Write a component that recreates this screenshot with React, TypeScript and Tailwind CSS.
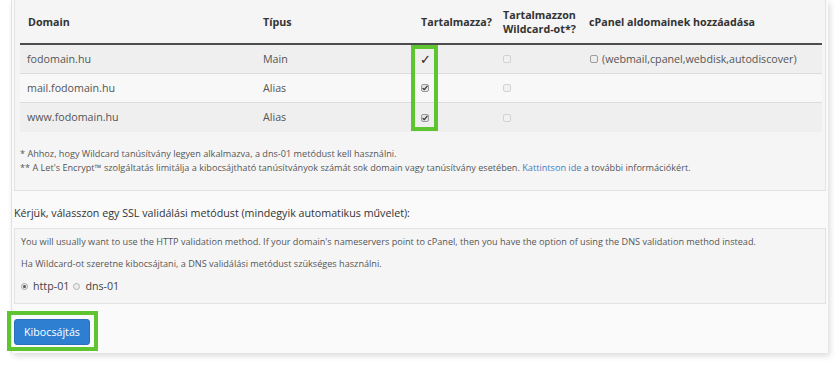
import React from "react";

const CheckMark = () => (
  <svg width="6" height="6" viewBox="0 0 8 8" className="block">
    <path d="M1.2 4.4 L3.1 6.3 L6.9 1.5" fill="none" stroke="#333" strokeWidth="1.6" strokeLinecap="round" strokeLinejoin="round" />
  </svg>
);

const CheckedBox = () => (
  <span className="inline-flex w-[8px] h-[8px] items-center justify-center rounded-[2px] border border-[#9a9a9a] bg-[#e4e4e4]">
    <CheckMark />
  </span>
);

const DisabledBox = () => (
  <span className="inline-block w-[8px] h-[8px] rounded-[2px] border border-[#d2d2d2] bg-[#f1f1f1]" />
);

const EmptyBox = () => (
  <span className="inline-block w-[8px] h-[8px] rounded-[2px] border border-[#9c9c9c] bg-[#ededed]" />
);

const rows = [
  { domain: "fodomain.hu", type: "Main", main: true, bg: "bg-[#efefef]", border: true },
  { domain: "mail.fodomain.hu", type: "Alias", main: false, bg: "bg-[#f8f8f8]", border: true },
  { domain: "www.fodomain.hu", type: "Alias", main: false, bg: "bg-[#efefef]", border: false },
];

export default function App() {
  return (
    <div className="w-[835px] h-[367px] bg-white overflow-hidden relative font-['Open_Sans',sans-serif] text-[10.7px] text-[#444]">
      <div className="ml-[11px] w-[817px] bg-[#fafafa] border-l border-[#e2e2e2] pl-[2px] pr-[2px] pb-[8px] shadow-[2px_3px_6px_rgba(0,0,0,0.14)]">
        {/* Well 1 */}
        <div className="bg-[#f5f5f5] border border-t-0 border-[#e3e3e3] pl-[5px] pr-[3px] pb-[15px]">
          <div className="relative">
            <div className="grid grid-cols-[235px_158px_82px_86px_1fr] h-[45px] border-b-2 border-[#4d4d4d] font-bold text-[#333] leading-[14px] items-center">
              <div className="pl-[8px]">Domain</div>
              <div className="pl-[8px]">Típus</div>
              <div className="pl-[8px]">Tartalmazza?</div>
              <div className="pl-[8px] whitespace-nowrap">
                Tartalmazzon
                <br />
                Wildcard-ot*?
              </div>
              <div className="pl-[8px] whitespace-nowrap">cPanel aldomainek hozzáadása</div>
            </div>
            {rows.map((r) => (
              <div
                key={r.domain}
                className={`grid grid-cols-[235px_158px_82px_86px_1fr] h-[29px] items-center ${r.bg} ${r.border ? "border-b border-[#dcdcdc]" : ""} text-[#555]`}
              >
                <div className="pl-[7px]">{r.domain}</div>
                <div className="pl-[8px]">{r.type}</div>
                <div className="pl-[8px] flex items-center">
                  {r.main ? (
                    <span className="text-[13px] leading-none text-[#222] -ml-[1px]">✓</span>
                  ) : (
                    <CheckedBox />
                  )}
                </div>
                <div className="pl-[8px] flex items-center">
                  <DisabledBox />
                </div>
                <div className="pl-[9px] flex items-center gap-[4px] whitespace-nowrap">
                  {r.main && (
                    <>
                      <EmptyBox />
                      <span>(webmail,cpanel,webdisk,autodiscover)</span>
                    </>
                  )}
                </div>
              </div>
            ))}
            {/* highlight overlay */}
            <div className="absolute left-[391px] top-[45px] w-[27px] h-[86px] border-[4px] border-[#5ec430] pointer-events-none" />
          </div>
          <div className="pt-[15px] text-[9.15px] leading-[14px] text-[#555] whitespace-nowrap">
            <div>* Ahhoz, hogy Wildcard tanúsítvány legyen alkalmazva, a dns-01 metódust kell használni.</div>
            <div>
              ** A Let's Encrypt™ szolgáltatás limitálja a kibocsájtható tanúsítványok számát sok domain vagy tanúsítvány esetében.{" "}
              <span className="text-[#3f7ec4]">Kattintson ide</span> a további információkért.
            </div>
          </div>
        </div>

        <div className="mt-[15px] mb-[8px] leading-[14px] text-[#333] whitespace-nowrap">
          Kérjük, válasszon egy SSL validálási metódust (mindegyik automatikus művelet):
        </div>

        {/* Well 2 */}
        <div className="bg-[#f5f5f5] border border-[#e3e3e3] pl-[6px] pt-[6px] pb-[10px] text-[9.15px] leading-[14px] text-[#555]">
          <div className="whitespace-nowrap">
            You will usually want to use the HTTP validation method. If your domain's nameservers point to cPanel, then you have the option of using the DNS validation method instead.
          </div>
          <div className="mt-[8px] whitespace-nowrap">Ha Wildcard-ot szeretne kibocsájtani, a DNS validálási metódust szükséges használni.</div>
          <div className="mt-[8px] flex items-center text-[10.7px] text-[#444]">
            <span className="inline-flex w-[7px] h-[7px] rounded-full border border-[#a8a8a8] bg-[#ececec] items-center justify-center">
              <span className="w-[3px] h-[3px] rounded-full bg-[#555]" />
            </span>
            <span className="ml-[5px]">http-01</span>
            <span className="ml-[4px] inline-block w-[7px] h-[7px] rounded-full border border-[#b4b4b4] bg-[#ececec]" />
            <span className="ml-[5px]">dns-01</span>
          </div>
        </div>

        <div className="mt-[15px] relative">
          <button className="w-[76px] h-[26px] rounded-[3px] bg-[#2e7fd2] border border-[#2a70bd] text-white text-[10.7px] leading-none">
            Kibocsájtás
          </button>
          <div className="absolute -left-[7px] -top-[8px] w-[91px] h-[40px] border-[4px] border-[#5ec430] pointer-events-none" />
        </div>
      </div>
    </div>
  );
}
